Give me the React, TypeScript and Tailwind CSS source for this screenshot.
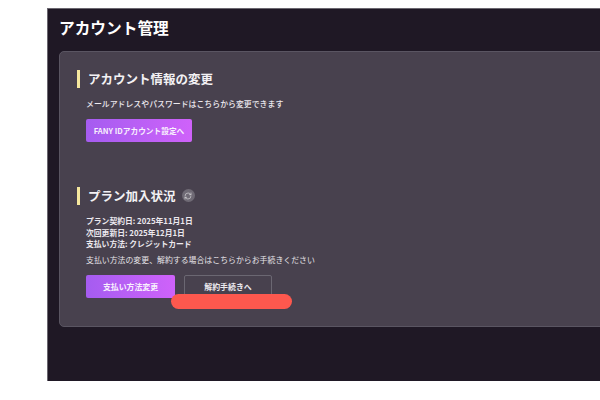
import React from "react";
import { RefreshCw } from "lucide-react";

const font = { fontFamily: '"Noto Sans CJK JP", "Noto Sans", sans-serif' };

function Heading({ children }: { children: React.ReactNode }) {
  return (
    <div className="flex items-center">
      <div className="w-[2.5px] h-[18px] bg-[#f5e79e] mr-[8.5px]" />
      <h2 className="pt-[1px] text-[12.5px] leading-[18px] font-bold text-[#f3f1f4]">{children}</h2>
    </div>
  );
}

export default function App() {
  return (
    <div className="relative w-[600px] h-[400px] overflow-hidden bg-white pl-[47px] pt-2" style={font}>
      <div className="w-[553px] h-[373px] bg-[#1f1825] border-t border-l border-[#6b6770] overflow-hidden pl-[11px]">
        <h1 className="h-[42px] pt-[8px] text-[15.7px] leading-[22px] font-bold text-white whitespace-nowrap">アカウント管理</h1>
        <div className="w-[600px] h-[276px] rounded-[5px] border border-[#5a5562] bg-[#48414e] pl-[17px] pt-[17px]">
          <Heading>アカウント情報の変更</Heading>
          <p className="mt-[9px] ml-[9px] text-[7.9px] leading-[14px] font-medium text-[#ece9ee] whitespace-nowrap">
            メールアドレスやパスワードはこちらから変更できます
          </p>
          <button className="mt-[8px] ml-[9px] block w-[106px] h-[23px] rounded-[2px] bg-gradient-to-r from-[#a55cf0] to-[#cf62fa] text-[7.7px] font-bold text-[#f8f0fd] whitespace-nowrap">
            FANY IDアカウント設定へ
          </button>
          <div className="mt-[44px] flex items-center">
            <Heading>プラン加入状況</Heading>
            <span className="ml-[6px] w-[13px] h-[13px] rounded-full bg-[#6f6a75] flex items-center justify-center">
              <RefreshCw size={8} strokeWidth={2} className="text-[#d8d6da]" />
            </span>
          </div>
          <div className="mt-[10px] ml-[9px] text-[7.8px] leading-[11.5px] font-bold text-[#ece9ee] whitespace-nowrap">
            <p>プラン契約日: 2025年11月1日</p>
            <p>次回更新日: 2025年12月1日</p>
            <p>支払い方法: クレジットカード</p>
          </div>
          <p className="mt-[3.5px] ml-[9px] text-[7.9px] leading-[14px] text-[#e6e3e8] whitespace-nowrap">
            支払い方法の変更、解約する場合はこちらからお手続きください
          </p>
          <div className="mt-[8px] ml-[9px] flex gap-[9px]">
            <button className="w-[89px] h-[23px] rounded-[2px] bg-gradient-to-r from-[#a55cf0] to-[#cf62fa] text-[7.9px] font-bold text-[#f8f0fd] whitespace-nowrap">
              支払い方法変更
            </button>
            <button className="w-[88px] h-[23px] rounded-[2px] border border-[#6b6772] text-[7.9px] font-bold text-[#ece9ee] whitespace-nowrap">
              解約手続きへ
            </button>
          </div>
        </div>
      </div>
      <div className="absolute left-[171px] top-[294px] w-[121px] h-[15px] rounded-full bg-[#fd584e]" />
    </div>
  );
}
